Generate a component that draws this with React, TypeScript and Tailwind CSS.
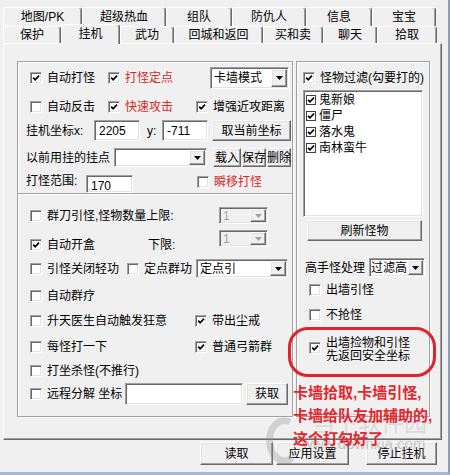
import React from "react";

const sunkenB =
  "border border-t-[#a0a0a0] border-l-[#a0a0a0] border-b-white border-r-white shadow-[inset_1px_1px_0_#696969,inset_-1px_-1px_0_#e3e3e3]";
const raised =
  "bg-[#f0f0f0] border border-t-white border-l-white border-b-[#696969] border-r-[#696969] shadow-[inset_-1px_-1px_0_#a0a0a0,inset_1px_1px_0_#e3e3e3]";

function Box({ checked }: { checked?: boolean }) {
  return (
    <span className={"w-[12px] h-[12px] shrink-0 bg-white flex items-center justify-center " + sunkenB}>
      {checked && (
        <svg width="8" height="8" viewBox="0 0 8 8">
          <path d="M1.2 3.6 L3.2 5.8 L7 1.6" stroke="#000" strokeWidth="1.7" fill="none" />
        </svg>
      )}
    </span>
  );
}

function CB({
  label,
  checked,
  red,
  className = "",
}: {
  label: React.ReactNode;
  checked?: boolean;
  red?: boolean;
  className?: string;
}) {
  return (
    <div className={"flex items-center " + className}>
      <Box checked={checked} />
      <span className={"ml-[5px] whitespace-nowrap " + (red ? "text-[#d42a2a]" : "")}>{label}</span>
    </div>
  );
}

function Input({ value, className = "" }: { value?: string; className?: string }) {
  return (
    <div className={"bg-white pl-[4px] pt-[4px] whitespace-nowrap overflow-hidden " + sunkenB + " " + className}>
      {value}
    </div>
  );
}

function Btn({ label, className = "" }: { label: string; className?: string }) {
  return (
    <div className={"flex items-center justify-center whitespace-nowrap " + raised + " " + className}>{label}</div>
  );
}

function Select({
  value,
  className = "",
  disabled,
  tight,
}: {
  value: string;
  className?: string;
  disabled?: boolean;
  tight?: boolean;
}) {
  return (
    <div
      className={
        "flex p-[1px] " +
        sunkenB +
        " " +
        (disabled ? "bg-[#f0f0f0] text-[#a0a0a0] " : "bg-white ") +
        className
      }
    >
      <span className={"flex-1 flex items-center whitespace-nowrap " + (tight ? "pl-0" : "pl-[2px]")}>{value}</span>
      <span className={"shrink-0 flex items-center justify-center " + (tight ? "w-[15px] " : "w-[16px] ") + raised}>
        <svg width="7" height="4" viewBox="0 0 7 4">
          <path d="M0 0H7L3.5 4Z" fill={disabled ? "#a0a0a0" : "#000"} />
        </svg>
      </span>
    </div>
  );
}

const row1 = [
  { t: "地图/PK", w: "w-[79px]" },
  { t: "超级热血", w: "w-[84px]" },
  { t: "组队", w: "w-[66px]" },
  { t: "防仇人", w: "w-[74px]" },
  { t: "信息", w: "w-[66px]" },
  { t: "宝宝", w: "w-[64px]" },
];
const row2 = [
  { t: "保护", w: "w-[58px]" },
  { t: "挂机", w: "w-[59px]", sel: true },
  { t: "武功", w: "w-[54px]" },
  { t: "回城和返回", w: "w-[89px]" },
  { t: "买和卖", w: "w-[60px]" },
  { t: "聊天", w: "w-[54px]" },
  { t: "拾取", w: "w-[60px]" },
];

const tabCls =
  "flex items-center justify-center border-t border-l border-r border-t-white border-l-white border-r-[#696969] rounded-t-[3px] shadow-[inset_-1px_0_0_#a0a0a0] whitespace-nowrap";

function ListItem({ label }: { label: string }) {
  return (
    <div className="h-[16px] flex items-center">
      <span className="w-[10px] h-[10px] bg-white border border-[#404040] flex items-center justify-center">
        <svg width="8" height="8" viewBox="0 0 8 8">
          <path d="M1 3.8 L3 5.8 L7 1.6" stroke="#000" strokeWidth="1.7" fill="none" />
        </svg>
      </span>
      <span className="ml-[3px]">{label}</span>
    </div>
  );
}

export default function App() {
  return (
    <div className="relative w-[450px] h-[475px] overflow-hidden bg-[#f0f0f0] text-[12px] leading-none text-black font-['Liberation_Sans','Noto_Sans_CJK_SC',sans-serif] border-r-[2px] border-r-[#8c9db5] border-b-[3px] border-b-[#a5b8d5] pl-[3px] pt-[7px]">
      {/* tab row 1 */}
      <div className="flex h-[19px]">
        {row1.map((r) => (
          <div key={r.t} className={tabCls + " h-full " + r.w}>
            {r.t}
          </div>
        ))}
      </div>
      {/* tab row 2 */}
      <div className="flex h-[17px] items-start">
        {row2.map((r) =>
          r.sel ? (
            <div
              key={r.t}
              className={tabCls + " relative z-10 -mt-[2px] h-[20px] bg-[#f0f0f0] pb-[2px] " + r.w}
            >
              {r.t}
            </div>
          ) : (
            <div key={r.t} className={tabCls + " h-full " + r.w}>
              {r.t}
            </div>
          )
        )}
      </div>

      {/* panel */}
      <div className="w-[439px] h-[397px] border border-t-white border-l-white border-r-[#696969] border-b-[#696969] shadow-[inset_-1px_-1px_0_#a0a0a0] flex pl-[13px] pt-[17px]">
        {/* left group */}
        <div className="w-[276px] h-[356px] border border-[#a0a0a0] shadow-[inset_1px_1px_0_#fff,1px_1px_0_#fff] flex flex-col">
          {/* upper */}
          <div className="h-[132px] border-b border-b-[#a0a0a0] shadow-[0_1px_0_#fff] flex flex-col">
            <div className="mt-[5px] h-[22px] flex items-center pl-[12px]">
              <CB label="自动打怪" checked className="w-[78px]" />
              <CB label="打怪定点" checked red className="w-[102px]" />
              <Select value="卡墙模式" className="w-[79px] h-full" />
            </div>
            <div className="mt-[7px] h-[21px] flex items-center pl-[12px]">
              <CB label="自动反击" className="w-[78px]" />
              <CB label="快速攻击" checked red className="w-[88px]" />
              <CB label="增强近攻距离" checked />
            </div>
            <div className="mt-[3px] h-[21px] flex items-center pl-[8px]">
              <span className="w-[68px] whitespace-nowrap">挂机坐标x:</span>
              <Input value="2205" className="w-[46px] h-full" />
              <span className="w-[22px] pl-[7px]">y:</span>
              <Input value="-711" className="w-[46px] h-full" />
              <Btn label="取当前坐标" className="ml-[4px] w-[79px] h-full" />
            </div>
            <div className="mt-[7px] h-[19px] flex items-center pl-[8px]">
              <span className="w-[88px] whitespace-nowrap">以前用挂的挂点</span>
              <Select value="" className="w-[93px] h-full" />
              <Btn label="载入" className="ml-[6px] w-[28px] h-full" />
              <Btn label="保存" className="ml-[1px] w-[24px] h-full" />
              <Btn label="删除" className="ml-[1px] w-[24px] h-full" />
            </div>
            <div className="mt-[8px] h-[18px] flex items-start pl-[8px]">
              <span className="w-[60px] leading-[12px] whitespace-nowrap">打怪范围:</span>
              <Input value="170" className="w-[47px] h-[18px] pt-[2px]" />
              <CB label="瞬移打怪" red className="ml-[64px] mt-[1px]" />
            </div>
          </div>
          {/* lower */}
          <div className="flex flex-col">
            <div className="mt-[13px] h-[17px] flex items-center pl-[12px]">
              <CB label="群刀引怪,怪物数量上限:" className="w-[189px]" />
              <Select value="1" disabled className="w-[49px] h-full" />
            </div>
            <div className="mt-[6px] h-[20px] flex items-start pl-[12px]">
              <CB label="自动开盒" checked className="w-[118px] mt-[9px]" />
              <span className="w-[71px] mt-[9px] leading-[12px]">下限:</span>
              <Select value="1" disabled className="w-[49px] h-[17px]" />
            </div>
            <div className="mt-[9px] h-[19px] flex items-center pl-[12px]">
              <CB label="引怪关闭轻功" className="w-[97px]" />
              <CB label="定点群功" className="w-[69px]" />
              <Select value="定点引" className="w-[92px] h-full" />
            </div>
            <div className="mt-[8px] h-[20px] flex items-center pl-[12px]">
              <CB label="自动群疗" />
            </div>
            <div className="mt-[5px] h-[20px] flex items-center pl-[12px]">
              <CB label="升天医生自动触发狂意" className="w-[165px]" />
              <CB label="带出尘戒" checked />
            </div>
            <div className="mt-[6px] h-[20px] flex items-center pl-[12px]">
              <CB label="每怪打一下" className="w-[165px]" />
              <CB label="普通弓箭群" checked />
            </div>
            <div className="mt-[4px] h-[20px] flex items-center pl-[12px]">
              <CB label="打坐杀怪(不推行)" />
            </div>
            <div className="mt-[2px] h-[22px] flex items-center pl-[12px]">
              <CB label="远程分解 坐标" className="w-[95px]" />
              <Input value="" className="w-[118px] h-full" />
              <Btn label="获取" className="ml-[3px] w-[42px] h-full" />
            </div>
          </div>
        </div>

        {/* right group */}
        <div className="ml-[3px] w-[134px] h-[356px] border border-[#a0a0a0] shadow-[inset_1px_1px_0_#fff,1px_1px_0_#fff] flex flex-col">
          <CB label="怪物过滤(勾要打的)" checked className="mt-[10px] h-[12px] pl-[6px]" />
          <div className={"mt-[6px] ml-[6px] w-[120px] h-[127px] bg-white flex flex-col pt-[1px] pl-[2px] " + sunkenB}>
            <ListItem label="鬼新娘" />
            <ListItem label="僵尸" />
            <ListItem label="落水鬼" />
            <ListItem label="南林蛮牛" />
          </div>
          <Btn label="刷新怪物" className="mt-[3px] ml-[10px] w-[115px] h-[21px]" />
          <div className="mt-[17px] h-[19px] flex items-center pl-[8px]">
            <span className="w-[64px] whitespace-nowrap">高手怪处理</span>
            <Select value="过滤高" tight className="w-[56px] h-full" />
          </div>
          <CB label="出墙引怪" className="mt-[7px] h-[12px] pl-[12px]" />
          <CB label="不抢怪" className="mt-[13px] h-[12px] pl-[12px]" />
          <div className="mt-[16px] flex items-start pl-[12px]">
            <span className="mt-[5px]">
              <Box checked />
            </span>
            <div className="ml-[5px] flex flex-col leading-[13px] whitespace-nowrap">
              <span>出墙捡物和引怪</span>
              <span>先返回安全坐标</span>
            </div>
          </div>
        </div>
      </div>

      {/* bottom buttons */}
      <div className="mt-[2px] h-[23px] flex">
        <Btn label="读取" className="ml-[197px] w-[73px] h-full" />
        <Btn label="应用设置" className="ml-[3px] w-[73px] h-full" />
        <Btn label="停止挂机" className="ml-[17px] w-[71px] h-full" />
      </div>

      {/* watermark */}
      <div className="pointer-events-none absolute left-[264px] top-[414px] w-[34px] h-[56px]">
        <svg width="34" height="56" viewBox="0 0 34 56">
          <path
            d="M26 8 A15 20 0 1 0 28 44"
            stroke="rgba(140,140,140,0.3)"
            strokeWidth="7"
            fill="none"
          />
        </svg>
      </div>
      <div className="pointer-events-none absolute left-[312px] top-[410px] text-[23px] leading-[26px] text-[rgba(150,150,150,0.25)] whitespace-nowrap">
        当下软件园
      </div>
      <div className="pointer-events-none absolute left-[302px] top-[436px] text-[15px] leading-[15px] text-[rgba(110,110,110,0.35)] whitespace-nowrap">
        www.downxia.com
      </div>

      {/* red annotation */}
      <div className="pointer-events-none absolute left-[288px] top-[327px] w-[148px] h-[50px] border-[3px] border-[#e0242c] rounded-[20px]" />
      <div className="pointer-events-none absolute left-[293px] top-[381px] text-[15px] leading-[23px] font-bold text-[#e4262e] whitespace-nowrap">
        <div>卡墙拾取,卡墙引怪,</div>
        <div>卡墙给队友加辅助的,</div>
        <div>这个打勾好了</div>
      </div>
    </div>
  );
}
